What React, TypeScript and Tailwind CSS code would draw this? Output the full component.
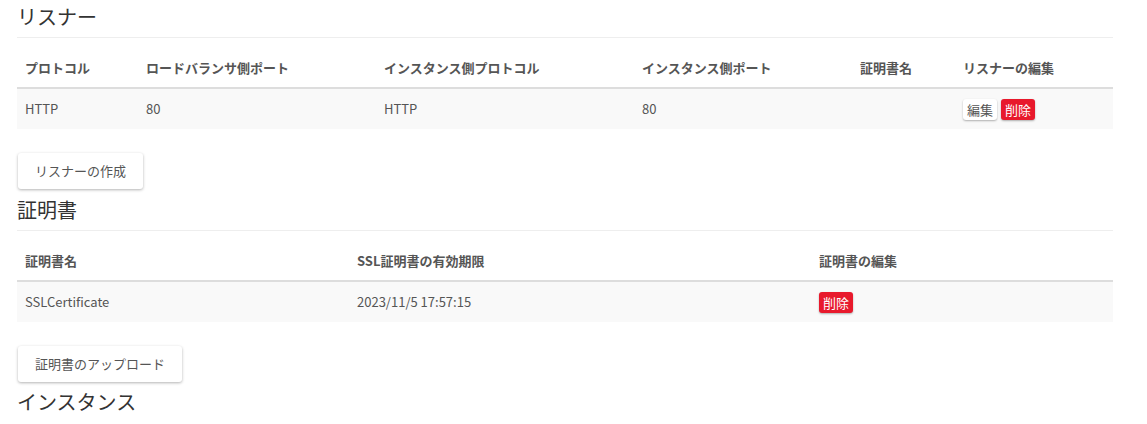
const LISTENER_COLS = [
  { label: "プロトコル", w: "w-[121px]" },
  { label: "ロードバランサ側ポート", w: "w-[238px]" },
  { label: "インスタンス側プロトコル", w: "w-[258px]" },
  { label: "インスタンス側ポート", w: "w-[218px]" },
  { label: "証明書名", w: "w-[103px]" },
  { label: "リスナーの編集", w: "flex-1" },
];

const CERT_COLS = [
  { label: "証明書名", w: "w-[332px]" },
  { label: "SSL証明書の有効期限", w: "w-[462px]" },
  { label: "証明書の編集", w: "flex-1" },
];

function SectionTitle({ children }: { children: React.ReactNode }) {
  return (
    <div>
      <h2 className="h-[26px] text-[20px] leading-[26px] text-[#333]">{children}</h2>
      <div className="mt-[7px] h-px bg-[#eee]" />
    </div>
  );
}

function SmallButton({ danger, children }: { danger?: boolean; children: React.ReactNode }) {
  return (
    <button
      className={
        danger
          ? "h-[21px] rounded-[3px] bg-[#e8192c] px-[4px] text-[13px] leading-[21px] text-white shadow-[0_1px_2px_rgba(0,0,0,0.3)]"
          : "h-[21px] rounded-[3px] bg-white px-[4px] text-[13px] leading-[21px] text-[#555] shadow-[0_1px_2px_rgba(0,0,0,0.3)]"
      }
    >
      {children}
    </button>
  );
}

function ActionButton({ children }: { children: React.ReactNode }) {
  return (
    <button className="ml-px h-[36px] rounded-[3px] bg-white px-[17px] text-[13px] text-[#555] shadow-[0_1px_3px_rgba(0,0,0,0.3)]">
      {children}
    </button>
  );
}

function HeaderRow({ cols }: { cols: { label: string; w: string }[] }) {
  return (
    <div className="mt-[13px] flex h-[38px] items-start border-b-2 border-[#ddd] pt-[7px]">
      {cols.map((c) => (
        <div key={c.label} className={`${c.w} px-[8px] text-[13px] font-bold text-[#555]`}>
          {c.label}
        </div>
      ))}
    </div>
  );
}

export default function App() {
  return (
    <div
      className="w-[1147px] bg-white pl-[17px] pr-[34px] pt-[4px]"
      style={{ fontFamily: '"Noto Sans CJK JP", "Noto Sans", sans-serif' }}
    >
      {/* Listeners */}
      <SectionTitle>リスナー</SectionTitle>
      <HeaderRow cols={LISTENER_COLS} />
      <div className="flex h-[40px] items-center bg-[#f9f9f9] text-[13px] text-[#555]">
        <div className="w-[121px] px-[8px]">HTTP</div>
        <div className="w-[238px] px-[8px]">80</div>
        <div className="w-[258px] px-[8px]">HTTP</div>
        <div className="w-[218px] px-[8px]">80</div>
        <div className="w-[103px] px-[8px]"></div>
        <div className="flex flex-1 gap-[4px] px-[8px]">
          <SmallButton>編集</SmallButton>
          <SmallButton danger>削除</SmallButton>
        </div>
      </div>
      <div className="mt-[24px] mb-[8px]">
        <ActionButton>リスナーの作成</ActionButton>
      </div>

      {/* Certificates */}
      <SectionTitle>証明書</SectionTitle>
      <HeaderRow cols={CERT_COLS} />
      <div className="flex h-[40px] items-center bg-[#f9f9f9] text-[13px] text-[#555]">
        <div className="w-[332px] px-[8px]">SSLCertificate</div>
        <div className="w-[462px] px-[8px]">2023/11/5 17:57:15</div>
        <div className="flex flex-1 px-[8px]">
          <SmallButton danger>削除</SmallButton>
        </div>
      </div>
      <div className="mt-[24px] mb-[7px]">
        <ActionButton>証明書のアップロード</ActionButton>
      </div>

      {/* Instances */}
      <h2 className="h-[26px] text-[20px] leading-[26px] text-[#333]">インスタンス</h2>
    </div>
  );
}
